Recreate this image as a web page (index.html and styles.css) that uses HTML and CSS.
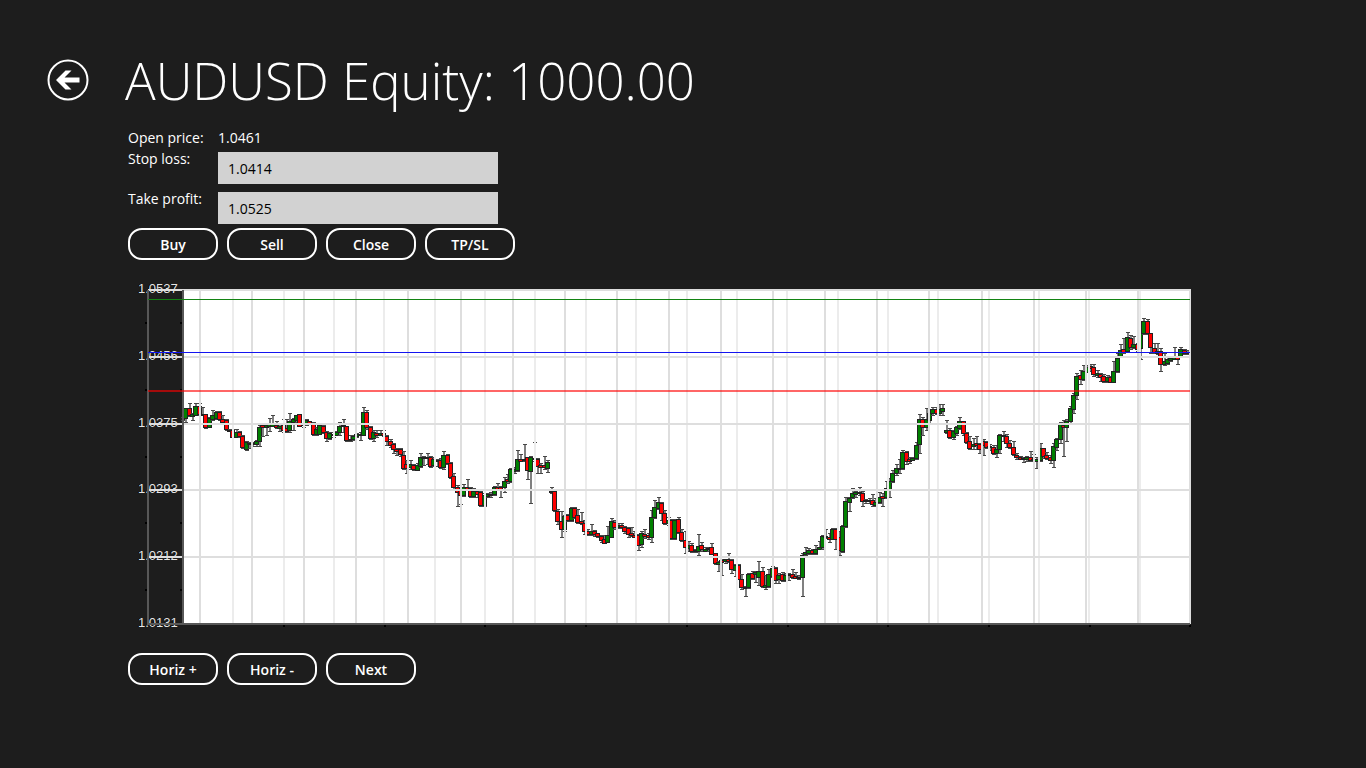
FILE: index.html
```html
<!DOCTYPE html>
<html lang="en">
<head>
    <meta charset="UTF-8">
    <meta name="viewport" content="width=device-width, initial-scale=1.0">
    <title>AUDUSD Equity: 1000.00</title>
    <link rel="stylesheet" href="styles.css">
</head>
<body>
    <header class="page-header">
        <button type="button" class="back-btn" aria-label="Back">
            <svg viewBox="0 0 42 42" width="42" height="42">
                <circle cx="21" cy="21" r="19.5" fill="none" stroke="#fff" stroke-width="2"/>
                <path d="M9 21 L18.500 11.500 H24.500 L17.500 18.500 H32.500 V23.500 H17.500 L24.500 30.500 H18.500 Z" fill="#fff"/>
            </svg>
        </button>
        <h1>AUDUSD Equity: 1000.00</h1>
    </header>

    <main class="content">
        <form class="order-form">
            <span>Open price:</span>
            <span>1.0461</span>
            <label for="stopLoss">Stop loss:</label>
            <input type="text" id="stopLoss" value="1.0414">
            <label for="takeProfit">Take profit:</label>
            <input type="text" id="takeProfit" value="1.0525">
        </form>

        <div class="button-row">
            <button type="button">Buy</button>
            <button type="button">Sell</button>
            <button type="button">Close</button>
            <button type="button">TP/SL</button>
        </div>

        <!-- The plot area starts at 0,0; price labels sit left of it -->
        <svg id="chart" class="chart" viewBox="-55 -10 1063 350" role="img" aria-label="AUDUSD price chart"></svg>

        <div class="button-row">
            <button type="button">Horiz +</button>
            <button type="button">Horiz -</button>
            <button type="button">Next</button>
        </div>
    </main>

    <script src="chart.js"></script>
</body>
</html>
```
FILE: styles.css
```css
/* General Styles */
* {
    box-sizing: border-box;
}

body {
    margin: 0;
    background: #1d1d1d;
    color: #fff;
    font-family: 'Segoe UI', 'Open Sans', sans-serif;
    font-size: 14px;
    line-height: 20px;
}

/* Header */
.page-header {
    display: flex;
    align-items: center;
    gap: 36px;
    height: 128px;
    padding: 31px 47px 0;
}

.page-header h1 {
    margin: 0;
    font-size: 51px;
    font-weight: 300;
    line-height: 76px;
    white-space: nowrap;
}

.back-btn {
    width: 42px;
    height: 42px;
    padding: 0;
    border: none;
    background: none;
    cursor: pointer;
}

.back-btn svg {
    display: block;
}

/* Content */
.content {
    padding: 0 175px 0 128px;
}

.order-form {
    display: grid;
    grid-template-columns: 90px 280px;
}

.order-form label {
    line-height: 22px;
}

.order-form input {
    height: 32px;
    margin: 4px 0;
    padding: 0 10px;
    border: none;
    background: #d2d2d2;
    color: #000;
    font: inherit;
}

/* Buttons */
.button-row {
    display: flex;
    gap: 9px;
}

.button-row button {
    width: 90px;
    height: 32px;
    padding: 1px 0 0;
    border: 2px solid #fff;
    border-radius: 14px;
    background: transparent;
    color: #fff;
    font: inherit;
    font-weight: 600;
    cursor: pointer;
}

/* Chart */
.chart {
    display: block;
    width: 100%;
    margin: 20px 0 23px;
    shape-rendering: crispEdges;
}

.plot {
    fill: #fff;
}

.axis {
    fill: #585858;
}

.tick {
    fill: #000;
}

.grid-major {
    fill: #dedede;
}

.grid-minor {
    fill: #ececec;
}

.wick {
    fill: #808080;
}

.cap {
    fill: #484848;
}

.up,
.down {
    stroke: #222;
    stroke-width: 1;
}

.up {
    fill: #008000;
}

.down {
    fill: #f00;
}

.price {
    fill: #e6e6e6;
    font-family: 'Liberation Sans', Arial, sans-serif;
    font-size: 13px;
    text-shadow: -1px 0 #000;
}

.take-profit {
    fill: #138313;
}

.open-price {
    fill: #1414f0;
}

.stop-loss {
    fill: #f00;
    opacity: 0.6;
}
```
FILE: chart.js
```js
const chart = document.getElementById('chart');
const plotWidth = 1007;
const plotHeight = 334;
const step = 3.35;

// high, body top, body bottom, low, direction (g = up, r = down)
const candles = `
127,128,129,130,g 118,118,128,132,g 113,118,125,126,r 123,124,126,130,g 113,116,125,125,g
113,116,124,125,r 117,124,125,125,r 124,124,137,138,r 127,128,137,137,g 120,125,129,130,g
121,122,128,129,g 121,122,129,130,r 125,129,132,133,r 129,130,139,140,r 139,140,141,141,r
139,140,147,147,r 139,142,147,147,g 141,142,146,147,r 145,146,157,158,r 151,152,159,160,g
152,153,154,158,r 152,153,154,156,g 150,151,154,156,g 135,137,151,156,g 134,135,137,146,r
133,135,137,145,g 128,134,136,141,g 125,134,136,136,g 131,135,137,138,r 134,136,138,141,g
129,135,140,142,r 129,138,141,142,r 123,131,140,142,g 128,129,132,140,g 125,125,130,132,g
124,124,136,136,r 133,134,135,137,r 129,130,134,135,g 131,131,133,134,r 132,133,144,145,r
137,139,144,145,g 135,135,144,144,g 135,136,142,143,r 141,142,148,151,r 142,143,148,149,g
142,144,145,147,r 141,142,145,145,g 132,136,142,145,g 129,135,136,142,g 136,136,150,151,r
145,149,150,151,g 145,146,149,150,g 143,144,146,147,g 142,144,145,150,g 117,122,145,145,g
120,122,137,139,r 136,137,148,149,r 140,142,148,151,g 140,143,145,147,r 140,143,145,145,g
140,143,145,146,r 145,146,151,155,r 149,151,155,157,r 153,154,159,163,r 158,159,161,165,r
158,159,164,166,r 161,165,178,179,r 170,174,178,183,r 170,174,177,179,g 174,175,179,180,r
173,175,180,180,g 163,167,176,177,g 166,167,168,175,r 163,167,168,174,g 166,167,176,177,r
167,169,175,176,g 169,170,171,176,r 168,170,177,178,r 161,165,177,179,g 164,165,173,174,r
172,173,187,188,r 183,186,197,199,r 195,197,202,216,r 199,200,205,214,r 194,197,205,206,g
189,197,199,200,r 197,198,206,207,r 198,201,206,207,g 200,201,204,207,r 201,202,215,216,r
203,205,215,216,g 203,204,206,207,g 202,204,205,207,g 196,197,204,205,g 193,197,199,200,r
196,197,199,207,r 187,191,197,202,g 184,189,191,193,r 178,179,191,192,g 177,179,181,183,g
160,169,180,181,g 164,169,171,171,r 154,169,170,171,r 167,167,180,189,r 166,167,181,213,g
152,168,169,171,r 168,169,176,183,r 173,175,177,183,r 166,175,177,179,r 170,172,178,182,g
197,201,202,203,r 199,201,220,221,r 219,221,231,234,r 221,231,239,247,r 225,226,239,241,g
224,225,230,231,r 217,218,230,231,g 217,218,227,228,r 219,225,232,233,r 222,231,233,234,r
230,233,241,244,r 239,241,244,245,r 234,241,244,245,g 240,241,244,246,r 243,243,246,247,r
245,246,250,252,r 245,249,253,253,r 236,245,252,252,g 228,231,247,247,g 230,232,237,239,r
233,235,237,238,g 233,235,237,238,r 236,237,241,243,r 237,238,244,247,r 237,243,245,246,r
241,245,247,247,r 244,245,255,260,r 241,243,254,257,g 239,244,246,248,r 243,245,247,249,r
220,227,247,252,g 210,217,227,228,g 207,212,218,219,g 212,213,223,230,r 220,223,233,234,r
227,230,233,235,g 229,230,248,249,r 229,230,248,249,g 227,229,242,243,r 239,242,250,251,r
241,250,257,263,r 251,255,258,261,g 253,255,261,262,r 259,260,261,262,r 244,256,261,265,g
252,255,259,261,r 257,259,261,261,g 257,258,259,261,g 253,257,264,264,r 263,263,273,274,r
271,272,274,281,g 269,270,272,285,r 269,269,271,273,g 263,269,271,272,r 269,270,279,283,r
274,275,280,286,g 274,275,289,289,r 284,289,297,299,r 296,297,298,306,r 283,284,297,298,g
281,283,288,289,r 281,282,284,292,g 271,281,287,295,g 277,281,296,297,r 285,295,297,299,g
279,284,296,297,g 276,278,286,287,g 277,278,290,293,r 283,285,289,293,g 282,284,290,291,r
283,285,290,291,g 283,284,285,290,g 279,284,287,288,r 282,286,288,288,r 285,287,288,289,r
263,265,287,306,g 257,262,264,265,g 258,260,263,264,g 259,260,263,264,r 255,259,263,264,g
251,257,259,259,g 245,246,257,259,g 239,246,247,248,r 243,247,249,252,r 238,239,249,249,g
238,239,249,259,r 241,247,260,265,r 235,236,261,262,g 207,211,236,237,g 207,208,212,221,g
198,203,207,208,g 201,202,204,207,g 197,202,203,205,r 201,203,211,216,r 209,210,211,213,r
208,210,211,213,g 204,210,214,216,r 208,212,215,216,g 202,207,212,213,g 203,206,208,216,r
191,198,207,208,g 188,191,199,207,g 180,183,191,192,g 174,178,183,185,g 169,178,179,183,g
160,162,178,179,g 161,162,171,174,r 167,169,171,173,r 167,168,170,170,g 152,155,168,169,g
124,129,154,163,g 127,129,137,145,r 118,129,137,140,g 121,123,130,133,g 117,119,123,125,g
117,119,123,124,r 114,119,123,125,g 114,118,121,125,g 130,140,142,143,g 138,140,147,148,r
140,141,147,149,g 136,137,143,145,g 127,131,138,139,g 131,131,143,145,r 142,143,152,153,r
146,151,158,159,r 148,154,156,159,g 146,153,155,159,r 153,154,159,163,r 149,151,155,165,r
151,152,157,158,r 154,156,157,160,r 155,157,163,164,r 155,159,163,167,g 144,145,159,163,g
141,145,146,151,g 144,146,153,157,r 150,153,157,158,r 151,157,164,165,r 163,165,167,169,r
166,167,169,169,r 167,168,169,172,g 166,167,169,171,g 161,167,170,171,r 164,169,170,171,r
167,169,171,178,g 153,158,170,171,g 158,158,166,168,r 162,165,168,169,r 165,167,170,173,r
153,156,170,177,g 148,149,157,160,g 132,134,149,153,g 130,135,137,166,r 129,131,137,151,g
116,118,131,133,g 103,105,119,123,g 83,86,105,109,g 80,85,89,94,r 75,81,89,90,g
75,77,82,82,g 74,76,78,81,r 74,77,84,86,r 80,83,85,87,g 83,84,87,91,r
84,86,91,92,r 85,87,91,92,g 86,87,92,92,r 71,81,92,92,g 63,68,81,82,g
54,60,67,67,g 48,59,62,63,r 42,47,61,61,g 45,48,57,59,r 46,54,57,58,g
53,54,59,61,r 33,41,58,69,g 28,31,43,44,g 29,31,43,44,r 43,43,57,63,r
53,58,62,63,r 53,61,63,64,r 58,61,74,81,r 63,71,74,75,g 67,69,73,74,g
66,68,70,71,g 57,67,69,69,g 66,67,69,74,r 57,59,66,67,g 59,60,63,64,r
60,62,63,64,g`.trim().split(/\s+/).map((c) => c.split(','));

const prices = ['1.0537', '1.0456', '1.0375', '1.0293', '1.0212', '1.0131'];

function rect(cls, x, y, w, h) {
    return `<rect class="${cls}" x="${x}" y="${y}" width="${w}" height="${h}"/>`;
}

let out = rect('plot', 0, 0, plotWidth, plotHeight);

// Candles
candles.forEach(([high, top, bottom, low, dir], i) => {
    const x = Math.round(i * step);
    out += rect('wick', x - 1, high, 2, low - high);
    out += rect('cap', x - 2, high, 4, 1);
    out += rect('cap', x - 2, low, 4, 1);
    out += rect(dir === 'g' ? 'up' : 'down', x - 2.5, +top + 0.5, 4, Math.max(bottom - top, 1));
});

// Price labels
prices.forEach((price, i) => {
    out += `<text class="price" x="-45" y="${Math.round(i * 66.8) + 3}">${price}</text>`;
});

// Grid
for (let i = 0; i <= 20; i++) {
    out += rect('grid-minor', Math.round(i * 50.35) - 1, 0, 2, plotHeight);
}
for (let i = 0; i < 19; i++) {
    out += rect('grid-major', Math.round(16 + i * 52.1), 0, 2, plotHeight);
}
for (let i = 0; i < 5; i++) {
    out += rect('grid-major', -35, Math.round(i * 66.8) - 1, plotWidth + 36, 2);
}
out += rect('grid-major', plotWidth - 1, 0, 2, plotHeight);

// Axes
out += rect('axis', -36, 0, 2, plotHeight);
out += rect('axis', -1, 0, 2, plotHeight);
out += rect('axis', -36, plotHeight - 1, plotWidth + 36, 2);

// Ticks
for (let i = 0; i < 5; i++) {
    const y = Math.round(33 + i * 66.8);
    out += rect('tick', -38, y - 1, 2, 2) + rect('tick', -3, y - 1, 2, 2);
}
for (let i = 0; i < 10; i++) {
    out += rect('tick', Math.round(100 + i * 100.7), plotHeight + 1, 2, 2);
}

// Order levels
out += rect('take-profit', -35, 9, plotWidth + 35, 1);
out += rect('open-price', -35, 62, plotWidth + 35, 1);
out += rect('stop-loss', -35, 100, plotWidth + 35, 2);

chart.innerHTML = out;
```
